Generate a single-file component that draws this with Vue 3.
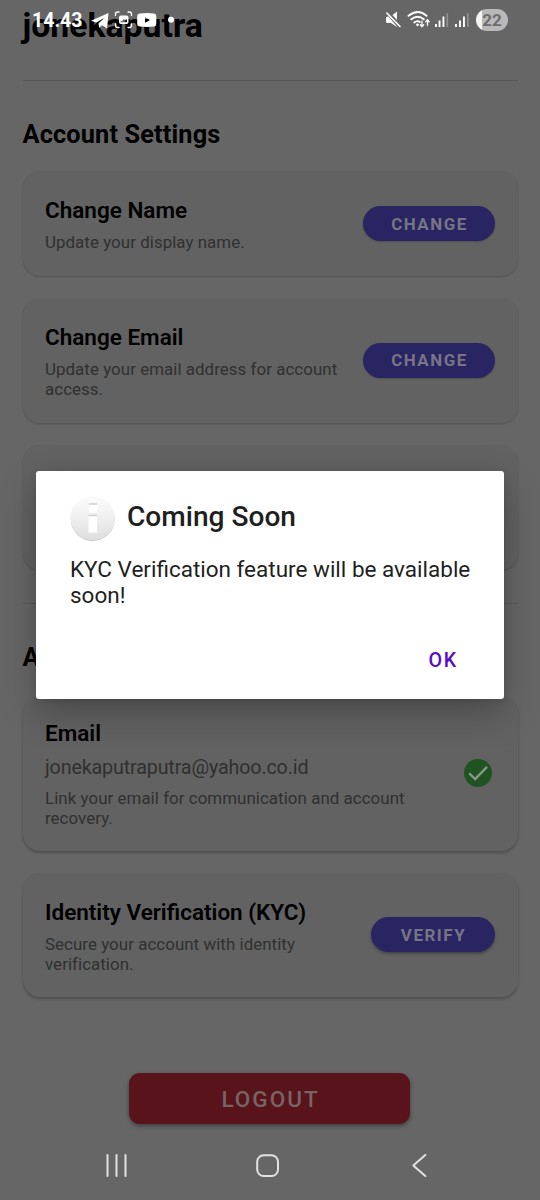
<script setup>
const settings = [
  { title: 'Change Name', desc: 'Update your display name.', size: 'one' },
  { title: 'Change Email', desc: 'Update your email address for account access.', size: 'two' },
]
</script>

<template>
  <div class="screen">
    <main class="page">
      <h1 class="username">jonekaputra</h1>
      <hr class="rule" />
      <h2 class="heading first">Account Settings</h2>
      <section v-for="s in settings" :key="s.title" class="card" :class="s.size">
        <div class="info">
          <h3>{{ s.title }}</h3>
          <p>{{ s.desc }}</p>
        </div>
        <button class="pill">CHANGE</button>
      </section>
      <section class="card two"></section>
      <hr class="rule second" />
      <h2 class="heading last">Account Verification</h2>
      <section class="card email raised">
        <div class="info wide">
          <h3>Email</h3>
          <div class="address">jonekaputraputra@yahoo.co.id</div>
          <p>Link your email for communication and account recovery.</p>
        </div>
        <svg class="check" viewBox="0 0 28 28">
          <circle cx="14" cy="14" r="14" fill="#1f5422" />
          <path d="M5.2 14.3 11.2 20 23 7.8" fill="none" stroke="#86968a" stroke-width="2.4" />
        </svg>
      </section>
      <section class="card kyc raised">
        <div class="info">
          <h3>Identity Verification (KYC)</h3>
          <p>Secure your account with identity verification.</p>
        </div>
        <button class="pill verify">VERIFY</button>
      </section>
      <button class="logout">LOGOUT</button>
    </main>

    <div class="dialog">
      <div class="dialog-head">
        <svg class="badge" viewBox="0 0 46 46">
          <defs>
            <linearGradient id="disc" x1="0" y1="0" x2="0" y2="1">
              <stop offset="0" stop-color="#fcfcfc" />
              <stop offset="0.5" stop-color="#efefef" />
              <stop offset="1" stop-color="#dedede" />
            </linearGradient>
          </defs>
          <circle cx="22.700" cy="23" r="22" fill="#c2c2c2" />
          <circle cx="22.700" cy="22.100" r="22.200" fill="url(#disc)" />
          <path d="M19 8h8v8.500h-8zM18.500 19.500h8.500v17h-8.500z" fill="#fff" />
          <path d="M19 8h8M18.500 19.500h8.500" stroke="#cfcfcf" stroke-width="1.300" />
        </svg>
        <span class="dialog-title">Coming Soon</span>
      </div>
      <p class="message">KYC Verification feature will be available soon!</p>
      <button class="ok">OK</button>
    </div>

    <div class="status">
      <span class="time">14.43</span>
      <svg class="left-icons" viewBox="0 0 90 20" fill="#fff">
        <path d="M0 10.800 17.500 3 16 18.300 11 15.200 8.100 17.800 7.500 13.300 14 7.500 5.400 12.600z" />
        <g fill="none" stroke="#fff" stroke-width="1.300" stroke-linecap="round">
          <path d="M24.500 5.500V4Q24.500 2 26.500 2H28M37 2h1.500q2 0 2 2v1.500M40.500 14v1.500q0 2-2 2H37M28 17.500h-1.500q-2 0-2-2V14" />
        </g>
        <path fill-rule="evenodd" d="M30 5.500h5.500q2 0 2 2v4.500q0 2-2 2H30q-2 0-2-2V7.500q0-2 2-2zM29.700 12.300h6.200V9.300l-2 .8-1.200-1-1.500 2-1.500.2z" />
        <path fill-rule="evenodd" d="M49 3.500Q56 2.700 63 3.500q2.300.2 2.300 2.800v7.500q0 2.600-2.300 2.800-7 .8-14 0-2.800-.2-2.800-2.800V6.300q0-2.600 2.800-2.800zM54 7.300v5.400l5.200-2.700z" />
        <circle cx="80" cy="9.800" r="3" />
      </svg>
      <svg class="right-icons" viewBox="0 0 86 22" fill="#fff">
        <path d="M1 8 3.500 7.500 12 17.500V18L6 14H2.500Q1 14 1 12.500zM7.500 6 12 2.500V11z" />
        <path d="M1.800 4 15 17.500" stroke="#fff" stroke-width="1.600" stroke-linecap="round" />
        <g fill="none" stroke="#fff" stroke-width="1.900" stroke-linecap="round">
          <path d="M23.500 6.800q9.500-7.500 18 0M26.300 10.300q6.500-5 12.500 0M29.300 13.500q3-2.500 5.500-.5" />
          <path d="M37 12v5.500m-1.700-1.700 1.700 1.900 1.700-1.900M42.500 16.500V11m-1.700 1.700 1.700-1.900 1.700 1.900" stroke-width="1.300" />
        </g>
        <circle cx="32.500" cy="15.800" r="1.400" />
        <path d="M50 15h1.900v3H50zM53.600 11.500h1.900V18h-1.900zM57.500 7.500h1.900V18h-1.900zM70 15h1.900v3H70zM74 11.500h1.900V18H74zM78 7.500h1.900V18H78z" />
        <path d="M61.500 4.200h1.600V18h-1.600zM82 4.200h1.600V18h-1.600z" fill="#929292" />
      </svg>
      <div class="battery">22</div>
    </div>

    <nav class="navbar">
      <svg viewBox="0 0 540 40" fill="none" stroke="#e2e2e2" stroke-width="2">
        <path d="M107.500 9v21M116.500 9v21M125.500 9v21" stroke-linecap="round" />
        <rect x="257.200" y="9.200" width="20.800" height="20.800" rx="6.500" />
        <path d="M425.300 9 413.300 19.400 425.300 30" stroke-linecap="round" stroke-linejoin="round" />
      </svg>
    </nav>
  </div>
</template>

<style>
body { background: #666; }
</style>

<style scoped>
.screen {
  position: relative;
  width: 540px;
  height: 1200px;
  overflow: hidden;
  background: #666;
  font-family: Roboto, sans-serif;
  color: #000;
}
h1, h2, h3, p, hr { margin: 0; }
button { border: 0; padding: 0; font-family: inherit; }
.page {
  display: flex;
  flex-direction: column;
  padding: 6px 22.5px 0;
}
.username { height: 40px; font-size: 33.75px; line-height: 40px; font-weight: 700; }
.rule { flex: none; height: 1px; border: 0; background: #575757; margin-top: 34px; }
.heading { font-size: 25.3px; line-height: 30px; font-weight: 700; letter-spacing: 0.15px; white-space: nowrap; }
.heading.first { margin-top: 39px; height: 30px; margin-bottom: 21px; }
.card {
  box-sizing: border-box;
  flex: none;
  display: flex;
  align-items: center;
  justify-content: space-between;
  padding: 0 22.5px;
  border-radius: 17px;
  background: #626262;
  box-shadow: 0 1px 2px rgba(0, 0, 0, 0.2);
  margin-bottom: 22px;
}
.raised { box-shadow: 0 2px 3px rgba(0, 0, 0, 0.25); }
.one { height: 105px; }
.two { height: 125px; }
.email { height: 154px; }
.kyc { height: 124px; }
.info { width: 300px; align-self: flex-start; padding-top: 25px; }
.info.wide { width: 385px; padding-top: 22px; }
h3 { font-size: 22.5px; line-height: 28px; font-weight: 600; white-space: nowrap; }
.info p { margin-top: 8px; font-size: 16.9px; line-height: 20px; letter-spacing: 0.05px; color: #303030; }
.address { margin-top: 9px; font-size: 19.7px; line-height: 24px; letter-spacing: -0.14px; color: #303030; }
.info .address + p { margin-top: 8px; }
.pill {
  flex: none;
  width: 132px;
  height: 35px;
  border-radius: 18px;
  background: #292562;
  color: #777585;
  font-size: 16.9px;
  font-weight: 700;
  letter-spacing: 1.55px;
  padding-left: 1px;
  box-shadow: 0 1px 2px rgba(0, 0, 0, 0.2);
}
.two .pill { margin-bottom: 1px; }
.verify { width: 124px; box-shadow: 0 2px 3px rgba(0, 0, 0, 0.3); }
.check { width: 28px; height: 28px; margin-right: 3px; margin-bottom: 2px; }
.second { margin-top: 11px; }
.heading.last { margin-top: 39px; height: 30px; margin-bottom: 23.5px; }
.logout {
  align-self: center;
  width: 281px;
  height: 51px;
  margin-top: 54px;
  margin-right: 1px;
  padding: 2px 0 0 2px;
  border-radius: 11px;
  background: #58131b;
  color: #776566;
  font-size: 22.5px;
  font-weight: 500;
  letter-spacing: 2px;
  box-shadow: 0 2px 4px rgba(0, 0, 0, 0.4);
}
.dialog {
  position: absolute;
  left: 36px;
  top: 470.5px;
  width: 468px;
  height: 228px;
  box-sizing: border-box;
  padding: 25px 33px 0 34px;
  border-radius: 3px;
  background: #fff;
  color: #1f1f1f;
  box-shadow: 0 14px 36px rgba(0, 0, 0, 0.25), 0 2px 8px rgba(0, 0, 0, 0.1);
}
.dialog-head { display: flex; align-items: center; gap: 11px; height: 46px; }
.badge { width: 46px; height: 46px; }
.dialog-title { font-size: 28.1px; line-height: 34px; font-weight: 500; margin-top: -4px; }
.message { margin-top: 14px; font-size: 22.5px; line-height: 26.4px; }
.ok {
  display: block;
  margin: 40.5px 13px 0 auto;
  background: none;
  color: #5a0bc8;
  font-size: 19.7px;
  line-height: 24px;
  font-weight: 500;
  letter-spacing: 1.75px;
}
.status {
  position: absolute;
  left: 0;
  top: 0;
  width: 540px;
  height: 40px;
  display: flex;
  align-items: center;
  box-sizing: border-box;
  padding: 0 32px;
  color: #fff;
}
.time { width: 59px; font-size: 19.5px; font-weight: 700; }
.left-icons { width: 90px; height: 20px; flex: none; }
.right-icons { width: 86px; height: 22px; flex: none; margin-left: auto; }
.battery {
  flex: none;
  width: 32px;
  height: 22px;
  margin-left: 5px;
  border-radius: 11px;
  background: linear-gradient(90deg, #f4f4f4 20%, #b9b9b9 20%);
  color: #6d6d6d;
  font-size: 17px;
  line-height: 22px;
  font-weight: 700;
  text-align: center;
}
.navbar { position: absolute; left: 0; bottom: 14px; width: 540px; height: 40px; }
.navbar svg { display: block; width: 540px; height: 40px; }
</style>
